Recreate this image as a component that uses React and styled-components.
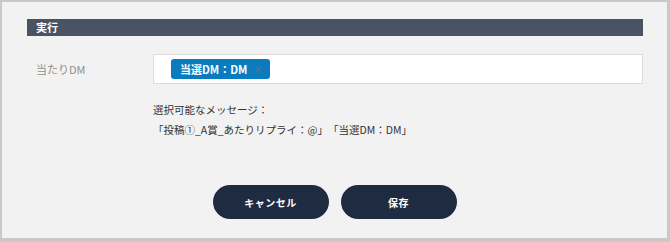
import React from "react";
import styled, { createGlobalStyle } from "styled-components";

const GlobalStyle = createGlobalStyle`
  * { box-sizing: border-box; }
  body {
    margin: 0;
    font-family: "Noto Sans CJK JP", "Noto Sans", sans-serif;
    background: #f2f2f2;
  }
`;

const Frame = styled.div`
  width: 670px;
  height: 242px;
  border-style: solid;
  border-color: #c9c9c9;
  border-width: 2px 3px 4px 2px;
  background: #f2f2f2;
  padding: 17px 24px 0 25px;
`;

const SectionHeader = styled.div`
  height: 17px;
  background: #4a5364;
  color: #fff;
  font-size: 11px;
  font-weight: 700;
  line-height: 17px;
  padding-left: 9px;
`;

const FieldRow = styled.div`
  display: grid;
  grid-template-columns: 126px 1fr;
  align-items: center;
  margin-top: 18px;
`;

const Label = styled.div`
  color: #8f8f8f;
  font-size: 11px;
  padding-left: 9px;
`;

const TagBox = styled.div`
  height: 30px;
  background: #fff;
  border: 1px solid #dcdcdc;
  display: flex;
  align-items: center;
  padding: 0 17px;
`;

const Tag = styled.span`
  display: inline-flex;
  align-items: center;
  gap: 8px;
  height: 20px;
  padding: 0 8px 0 9px;
  border-radius: 3px;
  background: #0b7bc0;
  color: #fff;
  font-size: 11px;
  font-weight: 700;
`;

const RemoveIcon = () => (
  <svg width="7" height="7" viewBox="0 0 7 7" aria-hidden="true">
    <path d="M0.8 0.8 L6.2 6.2 M6.2 0.8 L0.8 6.2" stroke="#4a7597" strokeWidth="1.3" strokeLinecap="round" />
  </svg>
);

const Hint = styled.div`
  margin: 16px 0 0 126px;
  color: #333;
  font-size: 10.5px;
  line-height: 20px;
  text-spacing-trim: space-all;
`;

const Actions = styled.div`
  display: flex;
  justify-content: center;
  gap: 12px;
  margin-top: 45px;
  padding-right: 1px;
`;

const Button = styled.button`
  width: 116px;
  height: 34px;
  border: none;
  border-radius: 17px;
  background: #1f2b40;
  color: #fff;
  font-family: inherit;
  font-size: 10px;
  font-weight: 700;
  letter-spacing: 0.5px;
  cursor: pointer;
`;

export default function App() {
  return (
    <>
      <GlobalStyle />
      <Frame>
        <SectionHeader>実行</SectionHeader>
        <FieldRow>
          <Label>当たりDM</Label>
          <TagBox>
            <Tag>
              当選DM：DM
              <RemoveIcon />
            </Tag>
          </TagBox>
        </FieldRow>
        <Hint>
          選択可能なメッセージ：
          <br />
          「投稿①_A賞_あたりリプライ：@」「当選DM：DM」
        </Hint>
        <Actions>
          <Button>キャンセル</Button>
          <Button>保存</Button>
        </Actions>
      </Frame>
    </>
  );
}
